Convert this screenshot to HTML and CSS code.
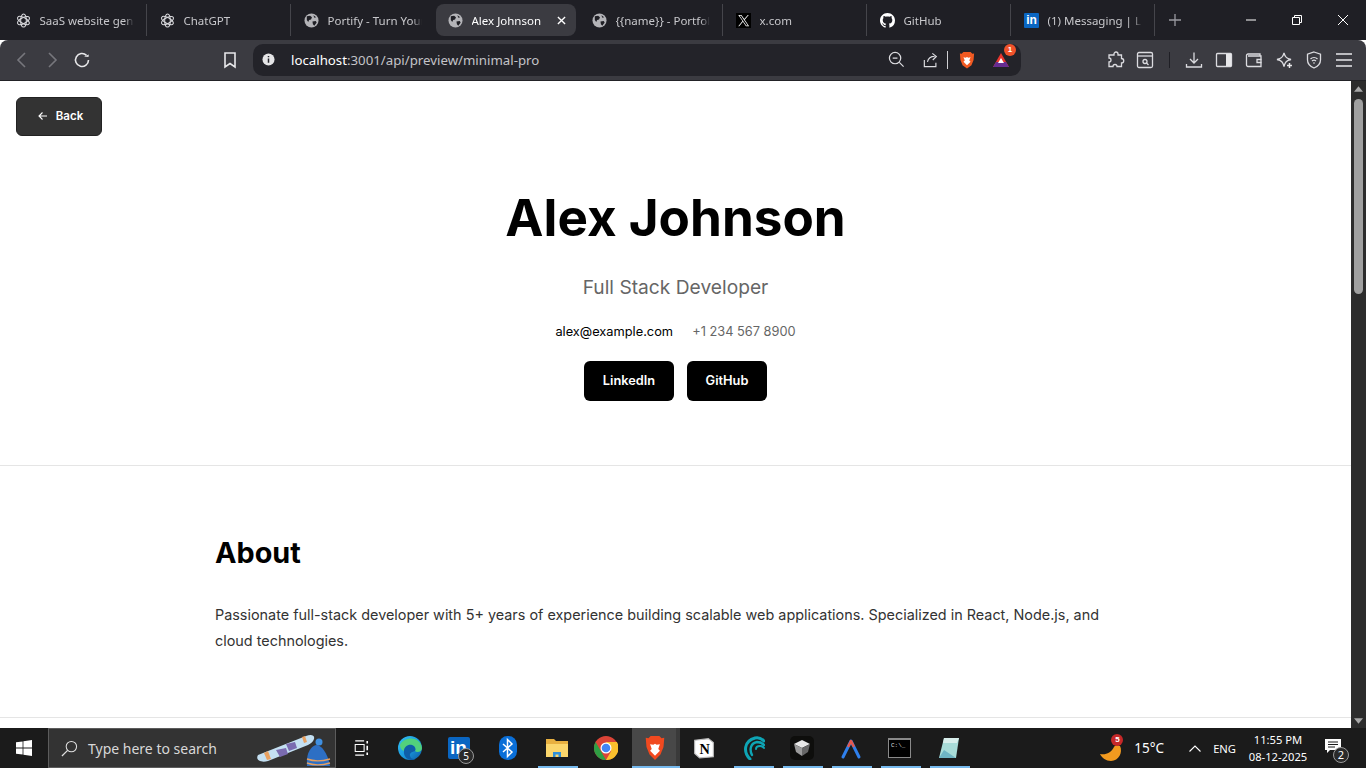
FILE: index.html
```html
<!DOCTYPE html>
<html lang="en">
<head>
  <meta charset="UTF-8">
  <title>Alex Johnson</title>
  <link rel="stylesheet" href="styles.css">
</head>
<body>
<svg class="defs" width="0" height="0">
  <symbol id="i-gpt" viewBox="0 0 16 16">
    <g fill="none" stroke="#d8d8dc" stroke-width="1.100">
      <ellipse cx="8" cy="8" rx="3" ry="7"/>
      <ellipse cx="8" cy="8" rx="3" ry="7" transform="rotate(60 8 8)"/>
      <ellipse cx="8" cy="8" rx="3" ry="7" transform="rotate(120 8 8)"/>
    </g>
  </symbol>
  <symbol id="i-globe" viewBox="0 0 16 16">
    <circle cx="8" cy="8" r="7.500" fill="#b4b4b8"/>
    <path d="M3 3.500 6.500 3l2 1.500-1 2.500-2 .5-1 2-1.500-2zM9 9l3.500-.5 1 1.500-2.500 3.500-1.500-1.500zM10 2.500l3 2-2 .5z" fill="#1f1f25"/>
  </symbol>
</svg>

<!-- Browser tabs -->
<div class="tabbar">
  <div class="tab"><svg class="fav"><use href="#i-gpt"/></svg><span class="tab-title">SaaS website generator</span></div>
  <div class="tab"><svg class="fav"><use href="#i-gpt"/></svg><span class="tab-title">ChatGPT</span></div>
  <div class="tab no-line"><svg class="fav"><use href="#i-globe"/></svg><span class="tab-title">Portify - Turn Your Resume</span></div>
  <div class="tab active"><svg class="fav"><use href="#i-globe"/></svg><span class="tab-title">Alex Johnson</span>
    <svg class="tab-close" viewBox="0 0 10 10"><path d="M1 1l8 8M9 1l-8 8" stroke="#fff" stroke-width="1.500"/></svg>
  </div>
  <div class="tab"><svg class="fav"><use href="#i-globe"/></svg><span class="tab-title">{{name}} - Portfolio</span></div>
  <div class="tab">
    <svg class="fav" viewBox="0 0 16 16"><rect width="16" height="16" fill="#000"/><path d="M9.300 7.100 13.600 2h-1L8.800 6.400 5.800 2H2.400l4.500 6.600L2.400 14h1l4-4.600 3.200 4.600H14zM3.800 2.800h1.600l7.200 10.400H11z" fill="#fff"/></svg>
    <span class="tab-title">x.com</span>
  </div>
  <div class="tab">
    <svg class="fav" viewBox="0 0 16 16"><path fill="#fff" d="M8 0C3.580 0 0 3.580 0 8c0 3.540 2.290 6.530 5.470 7.590.4.070.55-.17.55-.38 0-.19-.01-.82-.01-1.490-2.010.37-2.530-.49-2.690-.94-.09-.23-.48-.94-.82-1.130-.28-.15-.68-.52-.01-.53.63-.01 1.080.58 1.230.82.72 1.210 1.870.87 2.330.66.070-.52.28-.87.51-1.070-1.780-.2-3.640-.89-3.640-3.950 0-.87.31-1.590.82-2.150-.08-.2-.36-1.020.08-2.120 0 0 .67-.21 2.200.82.64-.18 1.320-.27 2-.27s1.360.09 2 .27c1.530-1.040 2.200-.82 2.200-.82.44 1.100.16 1.920.08 2.120.51.56.82 1.270.82 2.150 0 3.070-1.870 3.750-3.650 3.950.29.25.54.73.54 1.480 0 1.070-.01 1.930-.01 2.200 0 .21.15.46.55.38A8.010 8.010 0 0 0 16 8c0-4.420-3.580-8-8-8z"/></svg>
    <span class="tab-title">GitHub</span>
  </div>
  <div class="tab">
    <span class="fav li-fav">in</span>
    <span class="tab-title">(1) Messaging | LinkedIn</span>
  </div>
  <svg class="new-tab" viewBox="0 0 12 12"><path d="M6 0v12M0 6h12" stroke="#9a9aa0" stroke-width="1.300"/></svg>
  <div class="win-ctrls">
    <svg viewBox="0 0 12 12"><path d="M1 6h10" stroke="#fff"/></svg>
    <svg viewBox="0 0 12 12"><path d="M1.500 3.500h7v7h-7zM3.500 3.500v-2h7v7h-2" fill="none" stroke="#fff"/></svg>
    <svg viewBox="0 0 12 12"><path d="M1 1l10 10M11 1L1 11" stroke="#fff"/></svg>
  </div>
</div>

<!-- Address bar -->
<div class="toolbar">
  <div class="tool"><svg viewBox="0 0 18 18"><path d="M12 2 5 9l7 7" class="ln dim"/></svg></div>
  <div class="tool"><svg viewBox="0 0 18 18"><path d="M6 2l7 7-7 7" class="ln dim"/></svg></div>
  <div class="tool"><svg viewBox="0 0 18 18"><path d="M15.500 9a6.500 6.500 0 1 1-2-4.700" class="ln"/><path d="M11 5.500l4.500.5.3-2.500z" fill="#e8e8ea"/></svg></div>
  <div class="tool bookmark"><svg viewBox="0 0 18 18"><path d="M4 2h10v14l-5-3.500L4 16z" class="ln"/></svg></div>
  <div class="urlbar">
    <svg class="info" viewBox="0 0 14 14"><circle cx="7" cy="7" r="6.500" fill="#e4e4e6"/><path d="M7 6v4.500M7 3.200v1.500" stroke="#232329" stroke-width="1.600"/></svg>
    <span class="url"><span class="host">localhost</span>:3001/api/preview/minimal-pro</span>
    <div class="url-icons">
      <svg class="ic-zoom" viewBox="0 0 18 18"><circle cx="7.500" cy="7.500" r="6" class="ln thin"/><path d="M5 7.500h5M12 12l4.500 4.500" class="ln thin"/></svg>
      <svg class="ic-share" viewBox="0 0 18 18"><path d="M1.500 9v7.500h13V12M5 11c1-4 4-6 8-6M10.500 1.500 15 5l-4 4" class="ln thin"/></svg>
      <span class="url-sep"></span>
      <svg class="ic-brave" viewBox="0 0 18 20"><path d="M5 1h8l2 2 2-.3-.6 7.300-2.400 6-5 3.500-5-3.500-2.400-6L1 2.700 3 3z" fill="#f15a22"/><path d="M5 7l2.500.5L9 6.500l1.500 1L13 7l-1.500 3.500L13 12l-4 4-4-4 1.500-1.500z" fill="#fff"/></svg>
      <span class="rewards">
        <svg viewBox="0 0 18 16"><path d="M9 1l8 14H1z" fill="#e8352e"/><path d="M1 15l3-5h10l3 5z" fill="#662d91"/><path d="M9 6l3 5H6z" fill="#fff"/></svg>
        <span class="rewards-badge">1</span>
      </span>
    </div>
  </div>
  <div class="tool-right">
    <div class="tool"><svg viewBox="0 0 18 18"><path d="M7 3a2 2 0 1 1 4 0v1h3.500v3.500a2.200 2.200 0 1 1 0 4.500v3.500H10a2 2 0 1 0-4 0H2v-4.500a2 2 0 1 0 0-4V4h5z" class="ln thin"/></svg></div>
    <div class="tool narrow"><svg viewBox="0 0 18 18"><rect x="1.500" y="1.500" width="15" height="15" rx="1.500" class="ln thin"/><path d="M1.500 5h15" class="ln thin"/><circle cx="9" cy="10.500" r="2" class="ln thin"/><path d="M10.500 12l2 2" class="ln thin"/></svg></div>
    <span class="tool-sep"></span>
    <div class="tool"><svg viewBox="0 0 18 18"><path d="M9 1.500v10M5 8l4 4 4-4M1.500 13v3h15v-3" class="ln thin"/></svg></div>
    <div class="tool"><svg viewBox="0 0 18 18"><rect x="1.500" y="2.500" width="15" height="13" rx="1" class="ln thin"/><rect x="11" y="3" width="5" height="12" fill="#e8e8ea"/></svg></div>
    <div class="tool"><svg viewBox="0 0 18 18"><path d="M15 5V3H3a1.500 1.500 0 0 0-1.500 1.500V14A1.500 1.500 0 0 0 3 15.500h13V5H3" class="ln thin"/><path d="M16.500 8.500H12v3h4.500" class="ln thin"/></svg></div>
    <div class="tool"><svg viewBox="0 0 18 18"><path d="M9 2c1 4 2.500 5.500 7 6.500-4.500 1-6 2.500-7 7-1-4.500-2.500-6-7-7C6.500 7.500 8 6 9 2z" class="ln thin"/><path d="M14.500 12v5M12 14.500h5" stroke="#e8e8ea" stroke-width="1.500"/></svg></div>
    <div class="tool"><svg viewBox="0 0 18 18"><path d="M9 1l6.500 2.200V9c0 4-3 6.500-6.500 8C5.500 15.500 2.500 13 2.500 9V3.200z" class="ln thin"/><path d="M5.500 8a5 5 0 0 1 7 0M7 10a3 3 0 0 1 4 0" class="ln thin"/><circle cx="9" cy="12" r=".8" fill="#e8e8ea"/></svg></div>
    <div class="tool"><svg viewBox="0 0 18 18"><path d="M1 3h16M1 9h16M1 15h16" stroke="#e8e8ea" stroke-width="1.600"/></svg></div>
  </div>
</div>

<!-- The page in the viewport -->
<div class="viewport">
  <div class="page">
    <button class="back-btn">
      <svg viewBox="0 0 12 12"><path d="M10 6H2M5.500 2.500 2 6l3.500 3.500" fill="none" stroke="#fff" stroke-width="1.100"/></svg>
      Back
    </button>
    <header class="hero">
      <h1>Alex Johnson</h1>
      <p class="role">Full Stack Developer</p>
      <div class="contact">
        <a class="email">alex@example.com</a>
        <span class="phone">+1 234 567 8900</span>
      </div>
      <div class="links">
        <a class="link-btn linkedin">LinkedIn</a>
        <a class="link-btn github">GitHub</a>
      </div>
    </header>
    <section class="section">
      <div class="container">
        <h2>About</h2>
        <p>Passionate full-stack developer with 5+ years of experience building scalable web applications. Specialized in React, Node.js, and cloud technologies.</p>
      </div>
    </section>
  </div>
  <div class="scrollbar">
    <svg viewBox="0 0 10 6"><path d="M5 0l5 6H0z" fill="#a8a8a8"/></svg>
    <div class="track"><div class="thumb"></div></div>
    <svg viewBox="0 0 10 6"><path d="M0 0h10L5 6z" fill="#a8a8a8"/></svg>
  </div>
</div>

<!-- Windows taskbar -->
<div class="taskbar">
  <div class="start"><svg viewBox="0 0 16 16"><path d="M0 2.300 6.600 1.400V7.600H0zM7.400 1.300 16 0V7.600H7.400zM0 8.400H6.600V14.600L0 13.700zM7.400 8.400H16V16L7.400 14.700z" fill="#fff"/></svg></div>
  <div class="search">
    <svg class="search-ic" viewBox="0 0 18 18"><circle cx="11" cy="7" r="5.500" fill="none" stroke="#e0e0e0" stroke-width="1.100"/><path d="M7 11l-6 6" stroke="#e0e0e0" stroke-width="1.300"/></svg>
    <span>Type here to search</span>
    <svg class="search-art" viewBox="0 0 76 34">
      <path d="M2 22 50 3c5-2 9-1 8 3-1 3-3 4-6 6L12 28c-7 2-13-1-10-6z" fill="#c4e0f2"/>
      <path d="M8 20l3 7 4-1-3-8zM46 4l2 6 3-1-2-6z" fill="#e8a060"/>
      <path d="M20 17l10-2 2 6-8 3zM30 11l9-2 2 6-8 3z" fill="#7a6bb0"/>
      <path d="M51 33c-1-12 3-19 9-21 6 0 12 9 14 21z" fill="#2d6fc4"/>
      <circle cx="63" cy="9" r="3.500" fill="#3f8fe0"/>
      <path d="M51 26c8 3 16 2 23 0M51 30c8 3 16 2 23 0" stroke="#e8a060" stroke-width="1.400" fill="none"/>
    </svg>
  </div>
  <div class="apps">
    <div class="app"><svg class="ic24" viewBox="0 0 18 18"><path d="M2.500 1h10M2.500 17h10M2.500 5h10v8h-10z" fill="none" stroke="#fff" stroke-width="1.200"/><path d="M16 1v3M16 6.500v5M16 14v3" stroke="#fff" stroke-width="1.800"/></svg></div>
    <div class="app">
      <svg class="ic26" viewBox="0 0 24 24">
        <defs><linearGradient id="edge-g" x1="0" y1="0" x2="1" y2="1"><stop offset="0" stop-color="#35c1f1"/><stop offset=".5" stop-color="#1b9de2"/><stop offset="1" stop-color="#0c59a4"/></linearGradient></defs>
        <circle cx="12" cy="12" r="12" fill="url(#edge-g)"/>
        <path d="M2 9C5 1 22-1 24 12c0 4-5 5-7 3 2-4-3-7-7-5-3 1-4 3-4 5C3 14 2 11 2 9z" fill="#52d17c"/>
        <path d="M6 15c0-4 4-7 8-6 3 1 4 4 3 6-4 1-7 3-4 7 1 1 3 1.500 5 1-6 3-13-1-12-8z" fill="#0f5ea8"/>
      </svg>
    </div>
    <div class="app"><span class="li-big">in</span><span class="count-badge">5</span></div>
    <div class="app">
      <svg class="ic26" viewBox="0 0 18 24"><rect width="18" height="24" rx="8.500" fill="#0a6fd8"/><path d="M4 8l9 8-4.500 4.500v-17L13 8l-9 8" fill="none" stroke="#fff" stroke-width="1.500"/></svg>
    </div>
    <div class="app running">
      <svg class="ic26" viewBox="0 0 24 20"><path d="M1 1h8l2 2h12v16H1z" fill="#e8b040"/><path d="M1 6h22v13H1z" fill="#fbd66c"/><path d="M8 19v-5h8v5h-2.500v-2.500h-3V19z" fill="#2f8fd8"/></svg>
    </div>
    <div class="app">
      <svg class="ic26" viewBox="0 0 24 24">
        <circle cx="12" cy="12" r="12" fill="#db4437"/>
        <path d="M12 6h10.900A12 12 0 0 1 12 24l5.200-9z" fill="#fbc02d"/>
        <path d="M12 24A12 12 0 0 1 1.600 6L6.800 15z" fill="#2f9e44"/>
        <circle cx="12" cy="12" r="5.500" fill="#fff"/><circle cx="12" cy="12" r="4.300" fill="#4285f4"/>
      </svg>
    </div>
    <div class="app running current">
      <svg class="ic26" viewBox="0 0 18 22"><path d="M5 0h8l2 2 2.500-.3-.7 8.300-2.800 7L9 22l-5-5-2.800-7L.5 1.700 3 2z" fill="#f1491f"/><path d="M4.500 7.500 7.500 8 9 7l1.500 1 3-.5L12 12l1.500 1.500L9 18l-4.500-4.500L6 12z" fill="#fff"/></svg>
    </div>
    <div class="app">
      <svg class="ic22" viewBox="0 0 20 20"><path d="M1.500 3 14 1.500 18.500 5v13L6 19l-4.500-4z" fill="#fff" stroke="#bbb"/><text x="10.500" y="15.500" class="notion-n">N</text></svg>
    </div>
    <div class="app running">
      <svg class="ic26" viewBox="0 0 24 24" fill="none" stroke-linecap="round"><path d="M9 23C2 16 3 5 14 2c3-.8 6 0 9 3" stroke="#0ea5b5" stroke-width="3"/><path d="M11 19C8 13 10 7 16 6c3 0 5 .5 7 3" stroke="#0ea5b5" stroke-width="2.400"/><path d="M15 13c0-2 2-3 4-3 2 0 3 .5 4 2" stroke="#0ea5b5" stroke-width="2"/></svg>
    </div>
    <div class="app running">
      <span class="cube-box"><svg class="ic18" viewBox="0 0 18 18"><path d="M9 1l8 4-8 4-8-4z" fill="#e8e8e8"/><path d="M1 5l8 4v8l-6-4z" fill="#9a9a9a"/><path d="M17 5 9 9v8l6-4z" fill="#666"/></svg></span>
    </div>
    <div class="app running">
      <svg class="ic26" viewBox="0 0 20 24" fill="none" stroke-linecap="round" stroke-linejoin="round"><path d="M2 21 10 5l8 16" stroke="#2f80ed" stroke-width="3"/><path d="M7.500 10 10 5l2.500 5" stroke="#e5584d" stroke-width="2.500"/></svg>
    </div>
    <div class="app running">
      <span class="cmd-box">C:\_</span>
    </div>
    <div class="app running">
      <svg class="ic26" viewBox="0 0 24 24"><path d="M7 2h15l-3 20H2z" fill="#a8dcd8"/><path d="M7 2h15l-2 5H6z" fill="#d9efec"/><path d="M2 22l5-8 12 8z" fill="#6fb5c4"/></svg>
    </div>
  </div>
  <div class="tray">
    <span class="weather">
      <svg viewBox="0 0 24 22"><path d="M1 15c6 1 11-1 14-7 1-2 4-2 6-1 3 6-1 15-9 15-5 0-9-3-11-7z" fill="#f29a1f"/></svg>
      <span class="weather-badge">5</span>
    </span>
    <span class="temp">15°C</span>
    <svg class="chevron" viewBox="0 0 12 7"><path d="M.5 6.500 6 1l5.500 5.500" fill="none" stroke="#fff" stroke-width="1.100"/></svg>
    <span class="lang">ENG</span>
    <span class="clock">11:55 PM<br>08-12-2025</span>
    <span class="notify">
      <svg viewBox="0 0 16 15"><path d="M0 0h16v11H5l-3 3v-3H0z" fill="#fff"/><path d="M3 3h10M3 5.500h10M3 8h7" stroke="#1c1c1c"/></svg>
      <span class="count-badge">2</span>
    </span>
  </div>
</div>
</body>
</html>
```

FILE: styles.css
```css
* {
  box-sizing: border-box;
}

html, body {
  margin: 0;
  height: 768px;
  overflow: hidden;
}

body {
  display: flex;
  flex-direction: column;
  font-family: "Inter", "Liberation Sans", sans-serif;
  background: #fff;
}

.defs {
  position: absolute;
}

/* tabs */
.tabbar {
  height: 40px;
  flex: none;
  display: flex;
  align-items: flex-start;
  padding: 4px 0 0 4px;
  background: #1f1f25;
  font-family: "Noto Sans", "Liberation Sans", sans-serif;
  font-size: 11.500px;
  color: #c8c8cc;
}

.tab {
  position: relative;
  width: 143px;
  height: 32px;
  margin-right: 1px;
  padding: 0 12px;
  display: flex;
  align-items: center;
  gap: 8.500px;
  border-right: 1px solid #45454b;
}

.tab.no-line {
  border-right-color: transparent;
}

.tab.active {
  width: 140px;
  margin-right: 4px;
  padding: 0 10px 0 12px;
  background: #3b3b41;
  border-radius: 8px;
  border-right: none;
  color: #fff;
}

.fav {
  width: 15px;
  height: 15px;
  flex: none;
}

.li-fav {
  background: #0a66c2;
  color: #fff;
  font: bold 12px/15px "Liberation Sans", sans-serif;
  text-align: center;
  border-radius: 1px;
}

.tab-title {
  flex: 1;
  min-width: 0;
  white-space: nowrap;
  overflow: hidden;
  -webkit-mask-image: linear-gradient(to right, #000 90%, transparent 100%);
  mask-image: linear-gradient(to right, #000 90%, transparent 100%);
}

.tab-close {
  width: 9px;
  height: 9px;
  flex: none;
}

.new-tab {
  width: 12px;
  height: 12px;
  margin: 10px 0 0 13px;
}

.win-ctrls {
  margin-left: auto;
  margin-top: 10px;
  display: flex;
  gap: 34px;
  padding-right: 17px;
}

.win-ctrls svg {
  width: 12px;
  height: 12px;
}

/* address bar */
.toolbar {
  height: 41px;
  flex: none;
  display: flex;
  align-items: center;
  padding: 0 7px 1px;
  background: #3b3b41;
  border-bottom: 1px solid #222226;
  border-radius: 8px 8px 0 0;
}

.tool {
  width: 30px;
  height: 30px;
  flex: none;
  display: flex;
  align-items: center;
  justify-content: center;
}

.tool svg {
  width: 18px;
  height: 18px;
}

.tool.narrow {
  width: 28px;
}

.ln {
  fill: none;
  stroke: #e8e8ea;
  stroke-width: 1.600;
}

.ln.thin {
  stroke-width: 1.300;
  stroke: #dcdce0;
}

.ln.dim {
  stroke: #77777d;
}

.bookmark {
  margin-left: 118px;
}

.urlbar {
  width: 768px;
  height: 32px;
  margin-left: 8px;
  flex: none;
  display: flex;
  align-items: center;
  padding: 0 10px 0 9px;
  background: #232329;
  border-radius: 10px;
  font-family: "Noto Sans", "Liberation Sans", sans-serif;
  font-size: 13.250px;
  color: #c4c4c8;
}

.info {
  width: 13px;
  height: 13px;
  flex: none;
}

.url {
  margin-left: 16px;
}

.host {
  color: #fff;
}

.url-icons {
  margin-left: auto;
  display: flex;
  align-items: center;
}

.url-icons svg {
  display: block;
}

.ic-zoom {
  width: 17px;
  height: 17px;
}

.ic-share {
  width: 16px;
  height: 16px;
  margin-left: 18px;
}

.url-sep {
  width: 1px;
  height: 18px;
  margin-left: 8px;
  background: #cfcfd3;
}

.ic-brave {
  width: 16px;
  height: 18px;
  margin-left: 11px;
}

.rewards {
  position: relative;
  margin-left: 17px;
  margin-right: 1px;
}

.rewards svg {
  width: 18px;
  height: 16px;
}

.rewards-badge {
  position: absolute;
  top: -8px;
  right: -6px;
  width: 12px;
  height: 12px;
  border-radius: 50%;
  background: #f0522a;
  color: #fff;
  font: bold 8px/12px "Liberation Sans", sans-serif;
  text-align: center;
}

.tool-right {
  margin-left: auto;
  display: flex;
  align-items: center;
}

.tool-sep {
  width: 1px;
  height: 16px;
  margin: 0 9px 0 10px;
  background: #1f1f25;
}

/* page */
.viewport {
  height: 647px;
  flex: none;
  display: flex;
}

.page {
  position: relative;
  flex: 1;
  min-width: 0;
  overflow: hidden;
  background: #fff;
  color: #000;
  line-height: 1.6;
}

.back-btn {
  position: absolute;
  top: 16px;
  left: 16px;
  width: 86px;
  height: 39px;
  padding: 0 0 1px 2px;
  display: flex;
  align-items: center;
  justify-content: center;
  gap: 7px;
  border: 1px solid #222;
  border-radius: 6px;
  background: #333;
  color: #fff;
  font: 600 11.500px "Inter", sans-serif;
}

.back-btn svg {
  width: 12px;
  height: 12px;
}

.hero {
  padding: 96px 20px 64px;
  text-align: center;
  border-bottom: 1px solid #e5e5e5;
}

.hero h1 {
  margin: 0 0 12.800px;
  font-size: 51.200px;
  font-weight: 700;
}

.role {
  margin: 0 0 19.200px;
  font-size: 19.200px;
  color: #666;
}

.contact {
  display: flex;
  justify-content: center;
  gap: 19.200px;
  margin-bottom: 19.200px;
  font-size: 12.800px;
}

.phone {
  color: #666;
}

.links {
  display: flex;
  justify-content: center;
  gap: 13px;
}

.link-btn {
  height: 40px;
  display: flex;
  align-items: center;
  justify-content: center;
  background: #000;
  color: #fff;
  border-radius: 6px;
  font-size: 12.800px;
  font-weight: 600;
}

.linkedin {
  width: 90px;
}

.github {
  width: 80px;
}

.section {
  padding: 64px 0 63px;
  border-bottom: 1px solid #e5e5e5;
}

.container {
  max-width: 1000px;
  margin: 0 auto;
  padding: 0 40px 0 39.500px;
}

.section h2 {
  margin: 0 0 25.600px;
  font-size: 28.800px;
  font-weight: 700;
}

.section p {
  margin: 0;
  font-size: 14.400px;
  line-height: 1.8;
  color: #333;
}

/* scrollbar */
.scrollbar {
  width: 15px;
  flex: none;
  display: flex;
  flex-direction: column;
  align-items: center;
  padding: 5px 0 4px;
  background: #2c2c2c;
}

.scrollbar svg {
  width: 9px;
  height: 6px;
  flex: none;
}

.track {
  flex: 1;
  padding-top: 7px;
}

.thumb {
  width: 9px;
  height: 195px;
  border-radius: 5px;
  background: #a0a0a0;
}

/* taskbar */
.taskbar {
  height: 40px;
  flex: none;
  display: flex;
  background: #1b1b1b;
  color: #fff;
  font-family: "Noto Sans", "Liberation Sans", sans-serif;
}

.start {
  width: 48px;
  display: flex;
  align-items: center;
  justify-content: center;
}

.start svg {
  width: 16px;
  height: 16px;
}

.search {
  width: 288px;
  display: flex;
  align-items: center;
  background: #333;
  border: 1px solid #5c5c5c;
  padding-left: 12px;
  font-size: 14px;
  color: #d8d8d8;
}

.search-ic {
  width: 17px;
  height: 17px;
  margin-right: 10px;
}

.search-art {
  width: 76px;
  height: 34px;
  margin-left: auto;
  margin-right: 3px;
  margin-top: 4px;
}

.apps {
  display: flex;
}

.app {
  position: relative;
  width: 49px;
  height: 40px;
  display: flex;
  align-items: center;
  justify-content: center;
}

.app.running::after {
  content: "";
  position: absolute;
  left: 6px;
  right: 3px;
  bottom: 0;
  height: 2px;
  background: #76b9ed;
}

.app.current {
  width: 48px;
  margin: 0 -1px 0 2px;
  padding-left: 2px;
  background: #484848;
  border-right: 4px solid #3a3a3a;
}

.app.current::after {
  left: 0;
  right: -4px;
}

.ic18 {
  width: 18px;
  height: 18px;
}

.ic22 {
  width: 22px;
  height: 22px;
}

.ic24 {
  width: 16px;
  height: 16px;
}

.ic26 {
  width: 24px;
  height: 24px;
}

.notion-n {
  font: bold 13px "Liberation Serif", serif;
  text-anchor: middle;
  fill: #000;
}

.li-big {
  width: 22px;
  height: 22px;
  border-radius: 2px;
  background: #0a66c2;
  color: #fff;
  font: bold 19px/22px "Liberation Sans", sans-serif;
  text-align: center;
}

.count-badge {
  position: absolute;
  right: 9px;
  bottom: 4px;
  width: 16px;
  height: 16px;
  border-radius: 50%;
  border: 1px solid #9a9a9a;
  background: #2a2a2a;
  color: #fff;
  font-size: 10px;
  line-height: 14px;
  text-align: center;
}

.cube-box {
  width: 24px;
  height: 24px;
  display: flex;
  align-items: center;
  justify-content: center;
  background: #0e0e0c;
  border-radius: 5px;
}

.cmd-box {
  width: 23px;
  height: 20px;
  padding: 2px 0 0 2px;
  background: #000;
  border: 1px solid #8a8a8a;
  border-top-width: 2px;
  color: #ddd;
  font: 6px/8px "Liberation Mono", monospace;
}

.tray {
  margin-left: auto;
  padding-right: 13px;
  display: flex;
  align-items: center;
  font-size: 11.200px;
}

.weather {
  position: relative;
  width: 24px;
  height: 22px;
  margin-top: 4px;
}

.weather svg {
  width: 24px;
  height: 22px;
}

.weather-badge {
  position: absolute;
  top: -5px;
  right: 0;
  width: 12px;
  height: 12px;
  border-radius: 50%;
  background: #c62828;
  font: bold 8px/12px "Liberation Sans", sans-serif;
  text-align: center;
}

.temp {
  margin-left: 11px;
  font-size: 13.500px;
}

.chevron {
  width: 12px;
  height: 7px;
  margin-left: 25px;
}

.lang {
  margin-left: 12px;
}

.clock {
  width: 70px;
  margin-left: 7px;
  text-align: center;
  line-height: 17px;
}

.notify {
  position: relative;
  width: 40px;
  height: 40px;
  display: flex;
  align-items: center;
  justify-content: center;
}

.notify svg {
  width: 16px;
  height: 15px;
  margin-top: -4px;
}

.notify .count-badge {
  right: 4px;
  bottom: 5px;
  font-size: 11px;
}
```
